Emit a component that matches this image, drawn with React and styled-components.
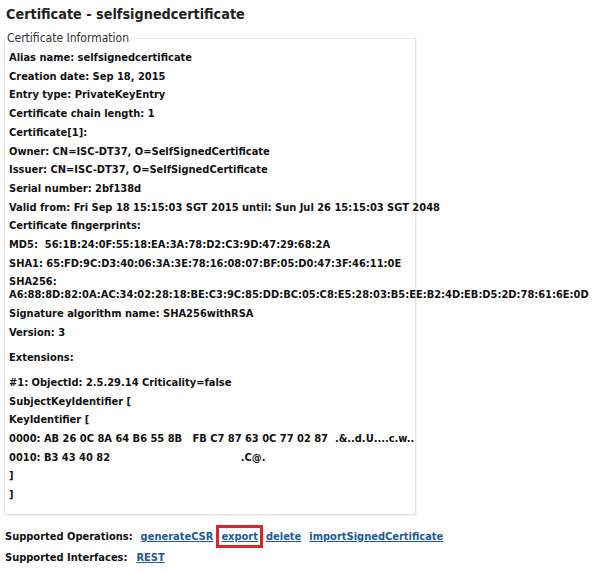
import React from 'react';
import styled, { createGlobalStyle } from 'styled-components';

const Global = createGlobalStyle`
  body {
    margin: 0;
    background: #fff;
    font-family: "DejaVu Sans Condensed", "DejaVu Sans", Verdana, sans-serif;
    color: #111;
  }
`;

const Page = styled.div`
  padding: 5px 0 0 4px;
`;

const Title = styled.h2`
  font-size: 14.3px;
  font-weight: bold;
  margin: 0 0 8px 2px;
  line-height: 18px;
  color: #222;
`;

const InfoBox = styled.fieldset`
  width: 412px;
  min-width: 0;
  box-sizing: border-box;
  margin: 0;
  padding: 0 7px 12px 4px;
  border: 1px solid #e4e4e4;
  border-top-color: #ececec;
  box-shadow: 1px 1px 0 #f2f2f2;
`;

const Legend = styled.legend`
  font-size: 12px;
  font-weight: normal;
  color: #333;
  padding: 0 2px 0 1px;
  margin-left: -3px;
  line-height: 14px;
`;

const Line = styled.p`
  margin: ${({ $gap }) => ($gap ? `${$gap}px` : '6px')} 0 0 0;
  font-size: 11px;
  font-weight: bold;
  line-height: 12.7px;
  white-space: nowrap;
  &:first-of-type {
    margin-top: 7px;
  }
`;

const Pre = styled.span`
  white-space: pre;
`;

const Footer = styled.div`
  margin-top: 15px;
  padding-left: 1px;
  display: flex;
  flex-direction: column;
  gap: 8px;
`;

const OpsRow = styled.div`
  display: flex;
  align-items: center;
  font-size: 11px;
  font-weight: bold;
  line-height: 13px;
  gap: ${({ $gap }) => $gap || 9}px;
`;

const Link = styled.a`
  color: #1d5a98;
  text-decoration: underline;
  cursor: pointer;
  ${({ $highlight }) =>
    $highlight &&
    `
    outline: 3px solid #d9262b;
    outline-offset: 2px;
  `}
`;

const lines = [
  'Alias name: selfsignedcertificate',
  'Creation date: Sep 18, 2015',
  'Entry type: PrivateKeyEntry',
  'Certificate chain length: 1',
  'Certificate[1]:',
  'Owner: CN=ISC-DT37, O=SelfSignedCertificate',
  'Issuer: CN=ISC-DT37, O=SelfSignedCertificate',
  'Serial number: 2bf138d',
  'Valid from: Fri Sep 18 15:15:03 SGT 2015 until: Sun Jul 26 15:15:03 SGT 2048',
  'Certificate fingerprints:',
  'MD5:  56:1B:24:0F:55:18:EA:3A:78:D2:C3:9D:47:29:68:2A',
  'SHA1: 65:FD:9C:D3:40:06:3A:3E:78:16:08:07:BF:05:D0:47:3F:46:11:0E',
];

const App = () => (
  <Page>
    <Global />
    <Title>Certificate - selfsignedcertificate</Title>
    <InfoBox>
      <Legend>Certificate Information</Legend>
      {lines.map((l) => (
        <Line key={l}><Pre>{l}</Pre></Line>
      ))}
      <Line>
        SHA256:
        <br />
        A6:88:8D:82:0A:AC:34:02:28:18:BE:C3:9C:85:DD:BC:05:C8:E5:28:03:B5:EE:B2:4D:EB:D5:2D:78:61:6E:0D
      </Line>
      <Line>Signature algorithm name: SHA256withRSA</Line>
      <Line>Version: 3</Line>
      <Line $gap={13}>Extensions:</Line>
      <Line $gap={12}>#1: ObjectId: 2.5.29.14 Criticality=false</Line>
      <Line>SubjectKeyIdentifier [</Line>
      <Line>KeyIdentifier [</Line>
      <Line><Pre>0000: AB 26 0C 8A 64 B6 55 8B   FB C7 87 63 0C 77 02 87  .&..d.U....c.w..</Pre></Line>
      <Line><Pre>0010: B3 43 40 82                                      .C@.</Pre></Line>
      <Line>]</Line>
      <Line>]</Line>
    </InfoBox>
    <Footer>
      <OpsRow $gap={8}>
        <span>Supported Operations:</span>
        <Link>generateCSR</Link>
        <Link $highlight>export</Link>
        <Link>delete</Link>
        <Link>importSignedCertificate</Link>
      </OpsRow>
      <OpsRow>
        <span>Supported Interfaces:</span>
        <Link>REST</Link>
      </OpsRow>
    </Footer>
  </Page>
);

export default App;
